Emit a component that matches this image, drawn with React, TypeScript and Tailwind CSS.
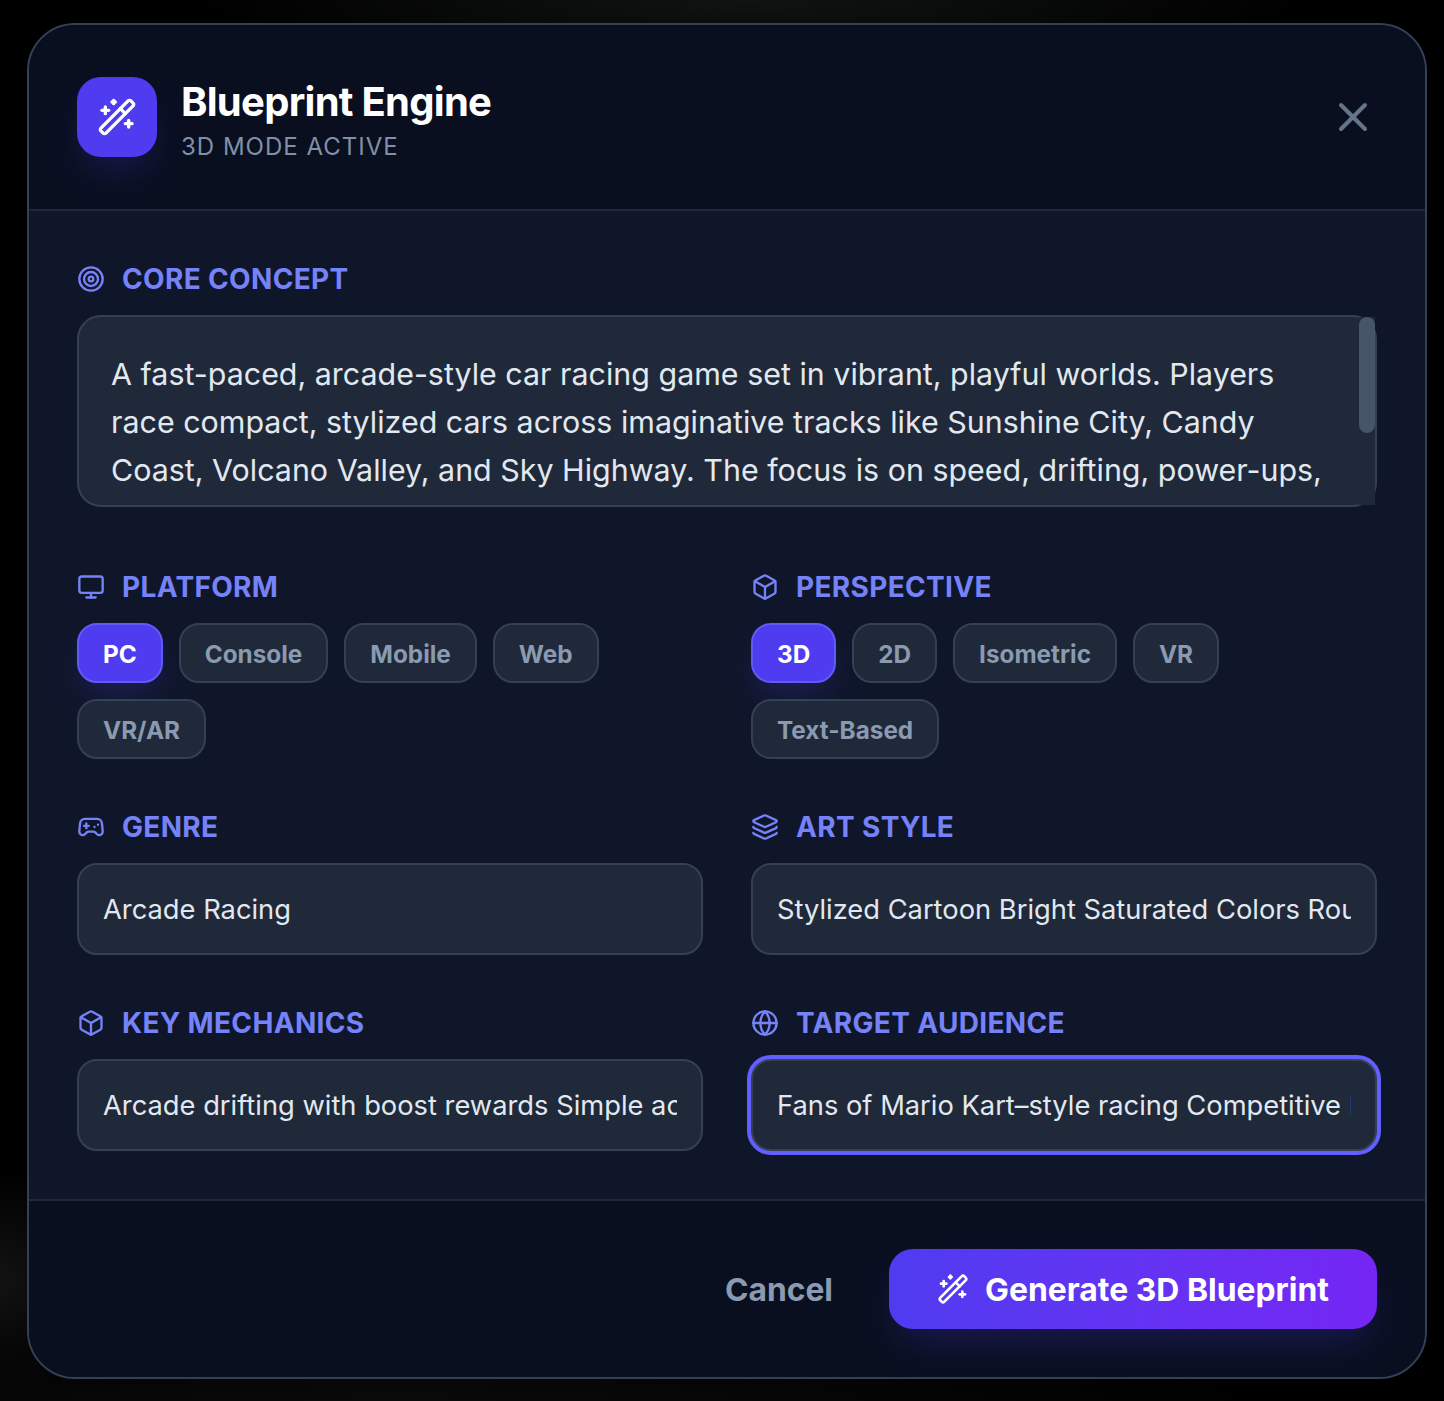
import { Box, Gamepad2, Globe, Layers, Monitor, Target, WandSparkles, X } from "lucide-react";
import type { ReactNode } from "react";

// --- SMALL PIECES ---
function Label({ icon, text }: { icon: ReactNode; text: string }) {
    return (
        <div className="flex items-center gap-[17px] h-10 mb-4 text-[#7582f8]">
            {icon}
            <span className="text-[28px] leading-10 font-[650] tracking-[0.012em]">{text}</span>
        </div>
    );
}

function Chips({ items }: { items: string[] }) {
    return (
        <div className="flex flex-wrap gap-4">
            {items.map((item, i) => (
                <div
                    key={item}
                    className={`h-[60px] px-6 pt-[3px] flex items-center rounded-[20px] border-2 text-[24.3px] font-[650] ${i === 0
                        ? "bg-[#4f3cf0] border-[#5f5bf5] text-white shadow-[0_16px_32px_-8px_rgba(79,60,240,0.25)]"
                        : "bg-[#1f2939] border-[#334155] text-[#8a9ab0]"
                        }`}
                >
                    {item}
                </div>
            ))}
        </div>
    );
}

function Field({ value, focused }: { value: string; focused?: boolean }) {
    return (
        <div
            className={`h-[92px] px-6 pt-[2px] flex items-center rounded-[20px] border-2 border-[#334155] bg-[#1f2939] text-[#e2e8f0] text-[27.3px] ${focused ? "ring-4 ring-[#615fff]" : ""}`}
        >
            <div className="w-full overflow-hidden whitespace-nowrap">{value}</div>
        </div>
    );
}

export default function App() {
    return (
        <div className="min-h-screen px-[27px] pt-[23px] pb-[22px] font-['Inter',sans-serif] antialiased bg-black bg-[radial-gradient(ellipse_560px_70px_at_750px_0px,#111313,transparent),radial-gradient(ellipse_110px_110px_at_0px_1280px,#121212,transparent),radial-gradient(ellipse_900px_60px_at_400px_1401px,#0a0a0a,transparent)]">
            <div className="w-[1400px] rounded-[48px] border-2 border-[#334155] bg-[#10162a] overflow-hidden">
                {/* Header */}
                <div className="flex items-center justify-between px-12 py-[52px] bg-[#0a0f20] border-b-2 border-[#1e293b]">
                    <div className="flex items-center gap-6">
                        <div className="w-20 h-20 rounded-3xl bg-[#4f3cf0] flex items-center justify-center text-white shadow-[0_20px_40px_-10px_rgba(79,60,240,0.25)]">
                            <WandSparkles size={40} />
                        </div>
                        <div className="h-20">
                            <div className="text-[40px] leading-[50px] font-bold tracking-[-0.018em] text-white">Blueprint Engine</div>
                            <div className="text-2xl leading-8 tracking-[0.042em] text-[#8090a8] mt-1">3D MODE ACTIVE</div>
                        </div>
                    </div>
                    <X size={48} className="text-[#64748b]" />
                </div>

                {/* Form */}
                <div className="p-12">
                    <Label icon={<Target size={28} />} text="CORE CONCEPT" />
                    <div className="relative h-[192px] mb-[60px] rounded-3xl border-2 border-[#334155] bg-[#1f2939]">
                        <div className="h-full overflow-hidden pl-8 pr-10 pt-[33px] text-[30.42px] leading-12 text-[#e2e8f0]">
                            A fast-paced, arcade-style car racing game set in vibrant, playful worlds. Players race compact, stylized cars across imaginative tracks like Sunshine City, Candy Coast, Volcano Valley, and Sky Highway. The focus is on speed, drifting, power-ups, and joyful chaos on every lap of every single race.
                        </div>
                        {/* scrollbar */}
                        <div className="absolute right-0 inset-y-0 w-4 bg-[#1f2939]">
                            <div className="w-4 h-[116px] rounded-full bg-[#475569]" />
                        </div>
                    </div>

                    <div className="grid grid-cols-2 gap-x-12 gap-y-12">
                        <div>
                            <Label icon={<Monitor size={28} />} text="PLATFORM" />
                            <Chips items={["PC", "Console", "Mobile", "Web", "VR/AR"]} />
                        </div>
                        <div>
                            <Label icon={<Box size={28} />} text="PERSPECTIVE" />
                            <Chips items={["3D", "2D", "Isometric", "VR", "Text-Based"]} />
                        </div>
                        <div>
                            <Label icon={<Gamepad2 size={28} />} text="GENRE" />
                            <Field value="Arcade Racing" />
                        </div>
                        <div>
                            <Label icon={<Layers size={28} />} text="ART STYLE" />
                            <Field value="Stylized Cartoon Bright Saturated Colors Rounded Shapes" />
                        </div>
                        <div>
                            <Label icon={<Box size={28} />} text="KEY MECHANICS" />
                            <Field value="Arcade drifting with boost rewards Simple acceleration" />
                        </div>
                        <div>
                            <Label icon={<Globe size={28} />} text="TARGET AUDIENCE" />
                            <Field focused value="Fans of Mario Kart–style racing Competitive Players" />
                        </div>
                    </div>
                </div>

                {/* Footer */}
                <div className="flex items-center justify-end gap-14 p-12 bg-[#0a0f20] border-t-2 border-[#1e293b]">
                    <div className="pt-[2px] text-[31.8px] font-[650] text-[#8a9ab0]">Cancel</div>
                    <div className="h-20 pl-12 pr-12 flex items-center gap-4 rounded-3xl bg-linear-to-r from-[#4f3cf0] to-[#7526f5] text-white shadow-[0_20px_40px_-10px_rgba(79,60,240,0.25)]">
                        <WandSparkles size={32} />
                        <span className="pt-[2px] text-[31.9px] font-bold">Generate 3D Blueprint</span>
                    </div>
                </div>
            </div>
        </div>
    );
}
